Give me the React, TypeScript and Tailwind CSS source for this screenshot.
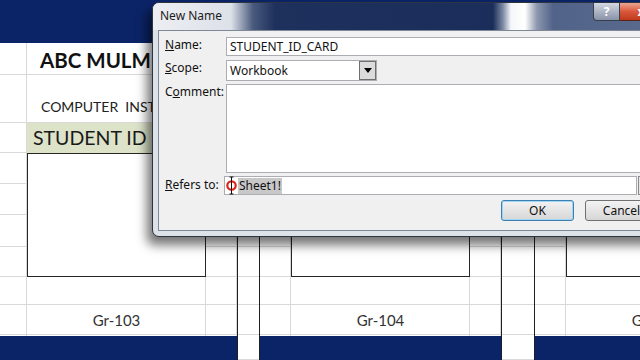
import React from 'react'

// Excel sheet behind a "New Name" dialog

const cells = Array.from({ length: 110 }, (_, i) => i)

const GRID =
  'grid grid-cols-[27px_179px_31px_23px_31px_179px_31px_34px_31px_179px] grid-rows-[43px_32px_48px_30px_31px_31px_32px_30px_28px_30px_25px]'

function Card({ col, label }: { col: string; label: string }) {
  return (
    <>
      <div className={`${col} row-start-2 flex items-center pt-[2px] pl-[13px] text-[20.5px] font-bold text-[#111] whitespace-nowrap`}>
        ABC MULMI COMPUTERS
      </div>
      <div className={`${col} row-start-3 flex items-end pb-[6px] pl-[14px] text-[14px] text-[#222] whitespace-pre`}>
        {'COMPUTER  INSTITUTE'}
      </div>
      <div className={`${col} row-start-4 flex items-center pl-[6px] bg-[#dde3c9] text-[19.5px] text-[#1a1a1a] whitespace-pre`}>
        {'STUDENT ID  CARD'}
      </div>
      <div className={`${col} row-start-5 row-span-4 bg-white border border-[#262626]`} />
      <div className={`${col} row-start-10 flex items-center justify-center text-[15px] text-[#333]`}>{label}</div>
    </>
  )
}

function Sheet() {
  return (
    <div className="grid font-['Lato',sans-serif]">
      <div className={`col-start-1 row-start-1 ${GRID}`}>
        {cells.map(i => (
          <div key={i} className="border-r border-b border-[#d9d9d9] bg-white" />
        ))}
      </div>
      <div className={`col-start-1 row-start-1 ${GRID}`}>
        <div className="col-start-1 col-span-10 row-start-1 bg-[#0b2468]" />
        <Card col="col-start-2" label="Gr-103" />
        <Card col="col-start-6" label="Gr-104" />
        <Card col="col-start-10" label="Gr-105" />
        <div className="col-start-4 row-start-2 row-span-10 border-x border-[#1f1f1f]" />
        <div className="col-start-8 row-start-2 row-span-10 border-x border-[#1f1f1f]" />
        <div className="col-start-1 col-span-3 row-start-11 mt-[1px] bg-[#0b2468]" />
        <div className="col-start-5 col-span-3 row-start-11 mt-[1px] bg-[#0b2468]" />
        <div className="col-start-9 col-span-2 row-start-11 mt-[1px] bg-[#0b2468]" />
      </div>
    </div>
  )
}

function NewNameDialog() {
  return (
    <div className="absolute left-[152px] top-[2px] w-[517px] h-[235px] flex flex-col rounded-l-[7px] rounded-tr-[7px] border border-[#2e3440] bg-[#dde2e9] shadow-[-5px_8px_11px_rgba(0,0,0,0.55)] font-['Noto_Sans',sans-serif] text-[#111]">
      {/* title bar */}
      <div className="h-[27px] flex items-start rounded-tl-[6px] bg-[linear-gradient(90deg,#eceef2_0px,#dde1e8_78px,#4a5a7e_100px,#1e305c_122px,#1b2d5a_340px,#7e8aa4_350px,#f5f7fa_358px,#ffffff_372px,#8c97ae_384px,#52638a_400px,#5b6b8d_515px)]">
        <span className="mt-[4px] ml-[7px] text-[12px] text-[#1c1c1c]">New Name</span>
        <div className="ml-auto mr-[5px] flex">
          <div className="w-[27px] h-[18px] flex items-center justify-center rounded-bl-[4px] border border-t-0 border-[#38404f] bg-gradient-to-b from-[#d3d8e0] to-[#8993a8] text-[12px] font-bold text-white">
            ?
          </div>
          <div className="w-[43px] h-[18px] flex items-center justify-center rounded-br-[4px] border border-t-0 border-l-0 border-[#5b2418] bg-gradient-to-b from-[#eba591] via-[#d9573b] to-[#c03a1c] text-[12px] font-bold text-white">
            x
          </div>
        </div>
      </div>

      {/* body */}
      <div className="flex-1 flex px-[5px] pb-[5px]">
        <div className="flex-1 flex flex-col pt-[6px] pl-[6px] bg-[#f0f0f0] border border-[#7f8896] text-[12px]">
          <div className="flex h-[19px]">
            <span className="w-[61px] leading-[16px]">
              <span className="underline">N</span>ame:
            </span>
            <div className="flex-1 mr-[7px] flex items-center pl-[3px] bg-white border border-[#abadb3]">STUDENT_ID_CARD</div>
          </div>

          <div className="flex h-[21px] mt-[4px]">
            <span className="w-[61px] leading-[16px]">
              <span className="underline">S</span>cope:
            </span>
            <div className="w-[151px] flex items-center bg-white border border-[#abadb3]">
              <span className="flex-1 pl-[3px]">Workbook</span>
              <div className="w-[17px] h-full flex items-center justify-center bg-[#dcdcdc] border border-[#707070]">
                <svg width="8" height="5" viewBox="0 0 8 5">
                  <path d="M0 0h8L4 5z" fill="#000" />
                </svg>
              </div>
            </div>
          </div>

          <div className="flex h-[89px] mt-[3px]">
            <span className="w-[61px] leading-[16px]">
              C<span className="underline">o</span>mment:
            </span>
            <div className="flex-1 mr-[7px] bg-white border border-[#abadb3]" />
          </div>

          <div className="flex h-[19px] mt-[3px]">
            <span className="w-[59px] leading-[16px] pt-[1px]">
              <span className="underline">R</span>efers to:
            </span>
            <div className="flex-1 flex items-center pl-[1px] bg-white border border-[#abadb3]">
              <svg width="12" height="19" viewBox="0 0 12 19" className="shrink-0">
                <circle cx="5.5" cy="9.5" r="4.2" fill="none" stroke="#e0241c" strokeWidth="2.2" />
                <path d="M3.5 1h4M5.5 1v17M3.5 18h4" stroke="#111" strokeWidth="1" fill="none" />
              </svg>
              <span className="h-[16px] leading-[16px] pl-[1px] pr-[1px] bg-[#c8c8c8]">Sheet1!</span>
            </div>
            <div className="w-[17px] ml-[1px] mr-[7px] bg-[#e6e6e6] border border-[#8a8a8a]" />
          </div>

          <div className="flex justify-end gap-[11px] h-[21px] mt-[5px] pr-[4px]">
            <div className="w-[73px] flex items-center justify-center rounded-[3px] border border-[#3c7fb1] bg-gradient-to-b from-[#f3f3f3] to-[#d6d6d6] shadow-[inset_0_0_0_1px_#9fd6f5]">
              OK
            </div>
            <div className="w-[73px] flex items-center justify-center rounded-[3px] border border-[#707070] bg-gradient-to-b from-[#f3f3f3] to-[#d6d6d6]">
              Cancel
            </div>
          </div>
        </div>
      </div>
    </div>
  )
}

export default function App() {
  return (
    <div className="relative w-[640px] h-[360px] overflow-hidden bg-white">
      <Sheet />
      <NewNameDialog />
    </div>
  )
}
